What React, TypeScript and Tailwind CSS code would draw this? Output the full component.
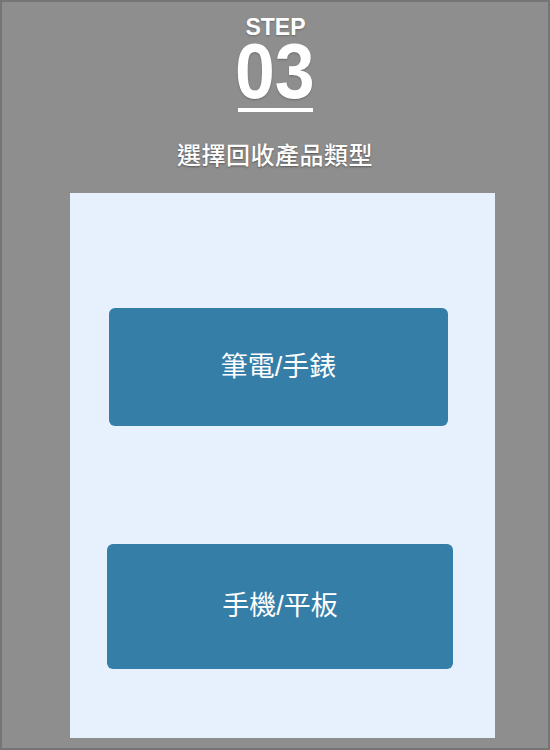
const CATEGORIES = [
  { label: "筆電/手錶", box: "mt-[115px] ml-[39px] h-[118px] w-[339px]" },
  { label: "手機/平板", box: "mt-[118px] ml-[37px] h-[125px] w-[346px]" },
];

function CategoryButton({ label, box }: { label: string; box: string }) {
  return (
    <button
      type="button"
      className={`${box} flex items-center justify-center rounded-[6px] bg-[#357ea8] text-[27px] text-white`}
    >
      {label}
    </button>
  );
}

export default function App() {
  return (
    <div
      className="h-[750px] w-[550px] border-2 border-[#757575] bg-[#8e8e8e]"
      style={{ fontFamily: '"Liberation Sans", "Noto Sans CJK TC", sans-serif' }}
    >
      <div className="flex flex-col items-center pt-[13px]">
        <div className="pl-[1px] text-[23px] font-bold leading-[24px] text-white [text-shadow:0_1px_2px_rgba(0,0,0,0.25)]">
          STEP
        </div>
        <div className="mt-[3px] scale-x-[0.93] text-[77px] font-bold leading-[58px] text-white [text-shadow:0_1px_2px_rgba(0,0,0,0.25)]">
          03
        </div>
        <div className="mt-[8px] h-[4px] w-[75px] bg-white" />
        <h2 className="mt-[29px] text-[24px] font-medium leading-[30px] tracking-[0.5px] text-white [text-shadow:0_1px_2px_rgba(0,0,0,0.4)]">
          選擇回收產品類型
        </h2>
      </div>
      <div className="ml-[68px] mt-[22px] flex h-[545px] w-[425px] flex-col bg-[#e6f1fd]">
        {CATEGORIES.map((c) => (
          <CategoryButton key={c.label} label={c.label} box={c.box} />
        ))}
      </div>
    </div>
  );
}
